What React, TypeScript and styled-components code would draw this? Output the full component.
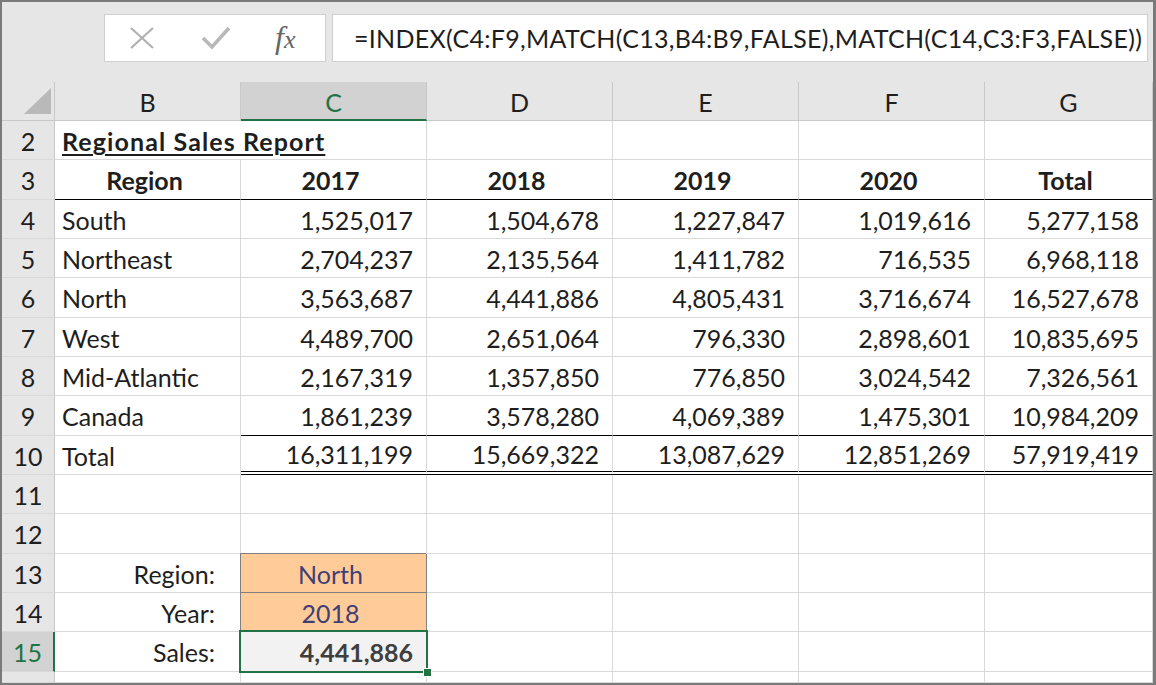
import styled, { createGlobalStyle, css } from "styled-components";

const GlobalStyle = createGlobalStyle`
  html, body {
    margin: 0;
    padding: 0;
    background: #ffffff;
  }
  * {
    box-sizing: border-box;
  }
`;

const GREEN = "#217346";
const GRID = "#d9d9d9";
const HEAD_LINE = "#c8c8c8";

const columns = ["B", "C", "D", "E", "F", "G"];

const salesRows = [
  ["South", "1,525,017", "1,504,678", "1,227,847", "1,019,616", "5,277,158"],
  ["Northeast", "2,704,237", "2,135,564", "1,411,782", "716,535", "6,968,118"],
  ["North", "3,563,687", "4,441,886", "4,805,431", "3,716,674", "16,527,678"],
  ["West", "4,489,700", "2,651,064", "796,330", "2,898,601", "10,835,695"],
  ["Mid-Atlantic", "2,167,319", "1,357,850", "776,850", "3,024,542", "7,326,561"],
  ["Canada", "1,861,239", "3,578,280", "4,069,389", "1,475,301", "10,984,209"],
];

const totals = ["16,311,199", "15,669,322", "13,087,629", "12,851,269", "57,919,419"];

const App = () => {
  return (
    <>
      <GlobalStyle />
      <Frame>
        <FormulaBar>
          <EditButtons>
            <svg width="26" height="22" viewBox="0 0 26 22">
              <path d="M2 1 L24 21 M24 1 L2 21" stroke="#b0b0b0" strokeWidth="2.2" fill="none" />
            </svg>
            <svg width="30" height="24" viewBox="0 0 30 24">
              <path d="M2 12 L11 21 L28 2" stroke="#b8b8b8" strokeWidth="3.6" fill="none" />
            </svg>
            <Fx>
              f<sub>x</sub>
            </Fx>
          </EditButtons>
          <FormulaInput>=INDEX(C4:F9,MATCH(C13,B4:B9,FALSE),MATCH(C14,C3:F3,FALSE))</FormulaInput>
        </FormulaBar>

        <Sheet>
          <Corner>
            <svg width="27" height="26" viewBox="0 0 27 26">
              <path d="M27 0 L27 26 L0 26 Z" fill="#b9b9b9" />
            </svg>
          </Corner>
          {columns.map((c) => (
            <ColHead key={c} $active={c === "C"}>
              {c}
            </ColHead>
          ))}

          <RowHead>2</RowHead>
          <Cell $noRight>
            <Title>Regional Sales Report</Title>
          </Cell>
          <Cell />
          <Cell />
          <Cell />
          <Cell />
          <Cell />

          <RowHead>3</RowHead>
          <Cell $bold $align="center" $rule="single">
            Region
          </Cell>
          {["2017", "2018", "2019", "2020", "Total"].map((y) => (
            <Cell key={y} $bold $align="center" $rule="single">
              {y}
            </Cell>
          ))}

          {salesRows.map((row, i) => (
            <Row key={row[0]} n={i + 4} cells={row} last={i === salesRows.length - 1} />
          ))}

          <RowHead>10</RowHead>
          <Cell>Total</Cell>
          {totals.map((t) => (
            <Cell key={t} $align="right" $rule="double">
              {t}
            </Cell>
          ))}

          {[11, 12].map((n) => (
            <EmptyRow key={n} n={n} />
          ))}

          <RowHead>13</RowHead>
          <Cell $align="right" $label>
            Region:
          </Cell>
          <InputCell>North</InputCell>
          <Cell />
          <Cell />
          <Cell />
          <Cell />

          <RowHead>14</RowHead>
          <Cell $align="right" $label>
            Year:
          </Cell>
          <InputCell>2018</InputCell>
          <Cell />
          <Cell />
          <Cell />
          <Cell />

          <RowHead $active>15</RowHead>
          <Cell $align="right" $label>
            Sales:
          </Cell>
          <OutputCell>
            4,441,886
            <FillHandle />
          </OutputCell>
          <Cell />
          <Cell />
          <Cell />
          <Cell />

          {/* last row is only partly in view, as in the window */}
          <RowHead $cut>16</RowHead>
          <Cell />
          <Cell />
          <Cell />
          <Cell />
          <Cell />
          <Cell />
        </Sheet>
      </Frame>
    </>
  );
};

const Row = ({ n, cells, last }: { n: number; cells: string[]; last: boolean }) => (
  <>
    <RowHead>{n}</RowHead>
    <Cell>{cells[0]}</Cell>
    {cells.slice(1).map((v, i) => (
      <Cell key={i} $align="right" $rule={last ? "single" : undefined}>
        {v}
      </Cell>
    ))}
  </>
);

const EmptyRow = ({ n }: { n: number }) => (
  <>
    <RowHead>{n}</RowHead>
    {columns.map((c) => (
      <Cell key={c} />
    ))}
  </>
);

const Frame = styled.div`
  width: 1156px;
  height: 685px;
  border: 2px solid #7a7a7a;
  border-right-width: 3px;
  background: #ffffff;
  display: flex;
  flex-direction: column;
  overflow: hidden;
  font-family: Lato, "Open Sans", sans-serif;
  color: #1e1e1e;
`;

const FormulaBar = styled.div`
  flex: 0 0 80px;
  background: #e6e6e6;
  display: flex;
  align-items: flex-start;
  padding: 12px 5px 0 102px;
  gap: 6px;
`;

const EditButtons = styled.div`
  width: 222px;
  height: 48px;
  background: #ffffff;
  border: 1px solid #d0d0d0;
  display: flex;
  align-items: center;
  padding-left: 24px;
  gap: 46px;
`;

const Fx = styled.span`
  font-family: "Liberation Serif", "DejaVu Serif", serif;
  font-style: italic;
  font-size: 32px;
  color: #666666;
  margin-left: -2px;
  margin-top: -2px;

  sub {
    font-size: 26px;
    vertical-align: 0;
    margin-left: 0;
  }
`;

const FormulaInput = styled.div`
  flex: 1;
  height: 48px;
  background: #ffffff;
  border: 1px solid #d0d0d0;
  display: flex;
  align-items: center;
  padding-left: 21px;
  font-size: 25px;
  letter-spacing: 0.3px;
  white-space: nowrap;
  overflow: hidden;
  color: #1e1e1e;
`;

const Sheet = styled.div`
  flex: 1;
  min-height: 0;
  overflow: hidden;
  display: grid;
  grid-template-columns: 53px repeat(5, 186px) 1fr;
  grid-template-rows: 39px repeat(14, 39.33px) minmax(0, 1fr);
  font-size: 25px;
`;

const Corner = styled.div`
  background: #e6e6e6;
  border-right: 1px solid ${HEAD_LINE};
  border-bottom: 1px solid ${HEAD_LINE};
  display: flex;
  align-items: flex-end;
  padding: 0 0 6px 22px;
`;

const ColHead = styled.div<{ $active?: boolean }>`
  display: flex;
  align-items: center;
  justify-content: center;
  padding-top: 2px;
  background: ${(p) => (p.$active ? "#d2d2d2" : "#e6e6e6")};
  color: ${(p) => (p.$active ? GREEN : "#1e1e1e")};
  border-right: 1px solid ${HEAD_LINE};
  border-bottom: ${(p) => (p.$active ? `2px solid ${GREEN}` : `1px solid ${HEAD_LINE}`)};
`;

const RowHead = styled.div<{ $active?: boolean; $cut?: boolean }>`
  display: flex;
  align-items: ${(p) => (p.$cut ? "flex-start" : "center")};
  justify-content: center;
  overflow: hidden;
  padding-top: ${(p) => (p.$cut ? "8px" : "2px")};
  background: ${(p) => (p.$active ? "#d2d2d2" : "#e6e6e6")};
  color: ${(p) => (p.$active ? GREEN : "#1e1e1e")};
  border-bottom: 1px solid ${GRID};
  border-right: ${(p) => (p.$active ? `2px solid ${GREEN}` : `1px solid ${HEAD_LINE}`)};
`;

type Align = "left" | "center" | "right";

const justify = { left: "flex-start", center: "center", right: "flex-end" };

const Cell = styled.div<{
  $align?: Align;
  $bold?: boolean;
  $rule?: "single" | "double";
  $noRight?: boolean;
  $label?: boolean;
}>`
  display: flex;
  align-items: center;
  justify-content: ${(p) => justify[p.$align ?? "left"]};
  padding: 2px 13px 0 7px;
  white-space: nowrap;
  font-weight: ${(p) => (p.$bold ? 700 : 400)};
  border-right: ${(p) => (p.$noRight ? "none" : `1px solid ${GRID}`)};
  border-bottom: 1px solid ${GRID};
  ${(p) => p.$label && css`padding-right: 25px;`}
  ${(p) => p.$rule === "single" && css`border-bottom: 1px solid #000000;`}
  ${(p) => p.$rule === "double" && css`border-bottom: 4px double #000000;`}
`;

const Title = styled.span`
  font-weight: 700;
  letter-spacing: 1.1px;
  text-decoration: underline;
  text-decoration-thickness: 2px;
  text-underline-offset: 3px;
`;

const InputCell = styled(Cell).attrs({ $align: "center" as Align })`
  background: #ffcc99;
  color: #3f3f76;
  border-right: 1px solid #7f7f7f;
  border-bottom: 1px solid #7f7f7f;
  box-shadow: -1px -1px 0 #7f7f7f;
`;

const OutputCell = styled(Cell).attrs({ $align: "right" as Align, $bold: true })`
  position: relative;
  background: #f2f2f2;
  color: #3f3f3f;

  &::after {
    content: "";
    position: absolute;
    inset: -2px -2px -2px -2px;
    border: 2px solid ${GREEN};
    pointer-events: none;
  }
`;

const FillHandle = styled.span`
  position: absolute;
  right: -6px;
  bottom: -6px;
  width: 9px;
  height: 9px;
  background: ${GREEN};
  border: 1px solid #ffffff;
  z-index: 1;
`;

export default App;
